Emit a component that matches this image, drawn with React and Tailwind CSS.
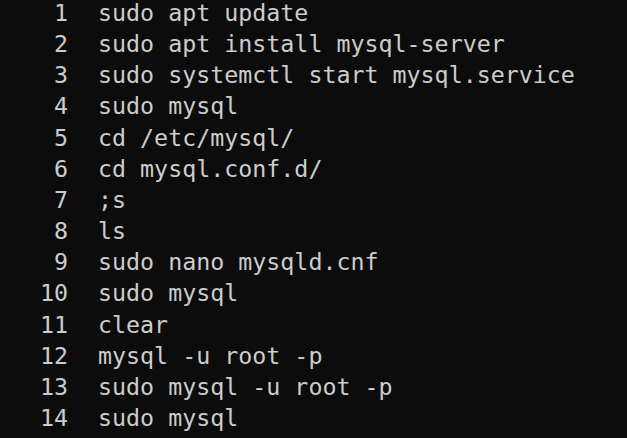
import React from "react";

const lines = [
  "sudo apt update",
  "sudo apt install mysql-server",
  "sudo systemctl start mysql.service",
  "sudo mysql",
  "cd /etc/mysql/",
  "cd mysql.conf.d/",
  ";s",
  "ls",
  "sudo nano mysqld.cnf",
  "sudo mysql",
  "clear",
  "mysql -u root -p",
  "sudo mysql -u root -p",
  "sudo mysql",
];

export default function App() {
  return (
    <div className="w-[627px] h-[438px] overflow-hidden bg-[#0c0c0c] text-[#cccccc] font-['DejaVu_Sans_Mono',monospace] text-[23.3px] leading-[31.15px] pt-[-2px]">
      <div className="flex flex-col -mt-[3px]">
        {lines.map((l, i) => (
          <div key={i} className="flex whitespace-pre">
            <span className="w-[68px] text-right">{i + 1}</span>
            <span className="ml-[30px]">{l}</span>
          </div>
        ))}
      </div>
    </div>
  );
}
